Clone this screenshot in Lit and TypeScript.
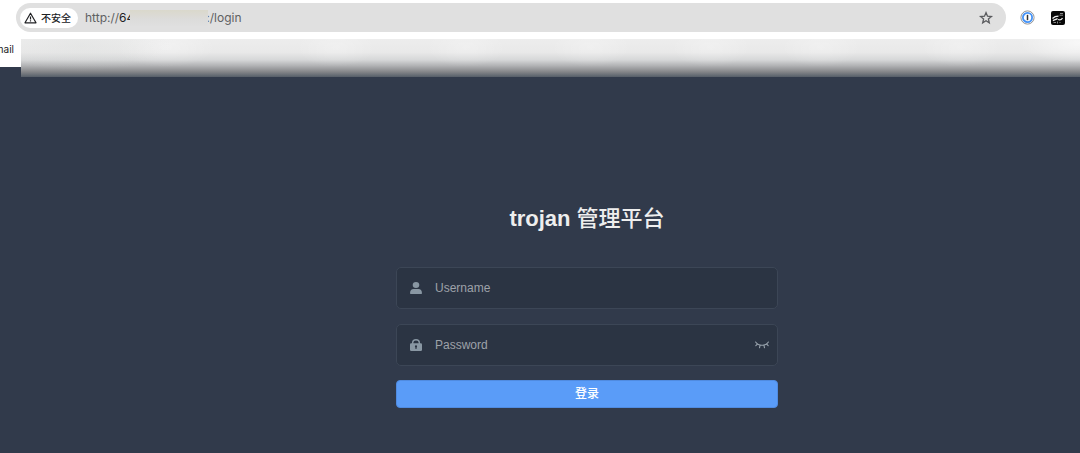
import { LitElement, html, css } from "lit";
import { customElement, state } from "lit/decorators.js";

@customElement("browser-bar")
class BrowserBar extends LitElement {
  static styles = css`
    :host {
      display: block;
      position: relative;
      z-index: 1;
      height: 67px;
      background: #fff;
      font-family: Inter, "Noto Sans CJK SC", sans-serif;
    }
    .toolbar {
      display: flex;
      align-items: center;
      padding: 3px 15px 0 16px;
    }
    .address {
      display: flex;
      align-items: center;
      flex: 1;
      height: 29px;
      box-sizing: border-box;
      padding: 0 12px 0 4px;
      border-radius: 15px;
      background: #e0e0e0;
    }
    button {
      display: flex;
      align-items: center;
      border: 0;
      padding: 0;
      background: none;
      font: inherit;
      color: #202124;
    }
    .security {
      height: 20px;
      gap: 4px;
      padding: 0 7px 0 4px;
      border-radius: 10px;
      background: #fff;
      font-size: 10px;
      line-height: 20px;
      font-weight: 500;
    }
    .url {
      display: flex;
      align-items: center;
      flex: 1;
      margin-left: 7px;
      font-size: 12px;
      line-height: 18px;
      color: #5f6063;
    }
    .host {
      color: #202124;
    }
    .mask {
      position: relative;
      width: 78px;
      height: 16px;
      margin: 0 -2px 0 -4px;
      background: linear-gradient(#dad8cc, #dcdcdb 60%, #dfdfdf);
    }
    .tools {
      display: flex;
      gap: 16px;
      margin-left: 14px;
    }
    .bookmarks {
      display: flex;
      justify-content: flex-end;
      width: 14px;
      margin-top: 8px;
      overflow: hidden;
      font-size: 10px;
      line-height: 18px;
      color: #202124;
    }
    .haze {
      position: absolute;
      top: 39px;
      right: 0;
      left: 21px;
      height: 38px;
      background:
        radial-gradient(90px 26px at 60px 6px, #d4d8d640, transparent),
        radial-gradient(50px 20px at 145px 8px, #ffffff50, transparent),
        radial-gradient(40px 20px at 315px 8px, #ffffff40, transparent),
        radial-gradient(40px 20px at 445px 8px, #ffffff40, transparent),
        radial-gradient(40px 20px at 570px 8px, #ffffff40, transparent),
        radial-gradient(40px 20px at 690px 8px, #ffffff40, transparent),
        radial-gradient(40px 20px at 800px 8px, #ffffff40, transparent),
        radial-gradient(40px 20px at 940px 8px, #ffffff40, transparent),
        radial-gradient(60px 20px at 100% 4px, #ffffffa0, transparent),
        linear-gradient(#ededed, #e9e9e9 35%, #d6d7d8 55%, #b2b3b5 70%, #86878a 86%, #606770 97%, #565e68);
    }
  `;

  render() {
    return html`
      <div class="toolbar">
        <div class="address">
          <button class="security">
            <svg width="13" height="12" viewBox="0 0 13 12" fill="none" stroke="#202124" stroke-width="1.2">
              <path d="M6.5 1.2 12 10.8H1Z" stroke-linejoin="round" />
              <path d="M6.5 4.4v3M6.5 8.3v1.2" />
            </svg>
            不安全
          </button>
          <div class="url">
            <span>http://</span><span class="host">64</span><span class="mask"></span><span>:/login</span>
          </div>
          <button aria-label="Bookmark">
            <svg width="16" height="16" viewBox="0 0 16 16" fill="none" stroke="#5a5b5e" stroke-width="1.3">
              <path d="m8 2.600 1.500 3.600 3.900.3-3 2.500.9 3.800L8 10.800l-3.300 2 .9-3.800-3-2.500 3.900-.3Z" />
            </svg>
          </button>
        </div>
        <div class="tools">
          <button aria-label="Passwords">
            <svg width="15" height="15" viewBox="0 0 15 15">
              <circle cx="7.5" cy="7.5" r="6.6" fill="#fff" stroke="#8a8a8a" stroke-width=".9" />
              <circle cx="7.5" cy="7.5" r="4.6" fill="#fff" stroke="#4593f7" stroke-width="1.8" />
              <path d="M7.5 4.8v5.4" stroke="#333" stroke-width="1.5" />
            </svg>
          </button>
          <button aria-label="Extension">
            <svg width="14" height="14" viewBox="0 0 14 14">
              <rect width="14" height="14" rx="2" fill="#080808" />
              <path d="M1.500 7.500C3 6 5 5.200 7.500 5.200M7 8.500c1.500.6 3.500.2 4.500-1.500M2 9.800c1.500-1.200 3-1 4.500-2.300" fill="none" stroke="#eee" stroke-width="1.300" />
              <path d="M9 2.500h3M8.500 4.200h3.500M2.500 11.500h2.500M6.500 10.500v2M8.500 11.500h1" stroke="#888" />
            </svg>
          </button>
        </div>
      </div>
      <div class="bookmarks"><span>Gmail</span></div>
      <div class="haze"></div>
    `;
  }
}

@customElement("login-form")
class LoginForm extends LitElement {
  @state() private reveal = false;

  static styles = css`
    :host {
      display: block;
      width: 382px;
      max-width: 90%;
      font-family: "Liberation Sans", "Noto Sans CJK SC", sans-serif;
    }
    h1 {
      margin: 0 0 31px;
      font-size: 22px;
      line-height: 34px;
      font-weight: 700;
      text-align: center;
      color: #eee;
    }
    h1 span {
      font-weight: 500;
    }
    .field {
      display: flex;
      align-items: center;
      height: 42px;
      box-sizing: border-box;
      margin-bottom: 15px;
      padding: 0 8px 0 13px;
      border: 1px solid #3c4656;
      border-radius: 5px;
      background: #2b3443;
    }
    .field + .field {
      margin-bottom: 14px;
    }
    label {
      display: flex;
    }
    input {
      flex: 1;
      min-width: 0;
      margin-left: 13px;
      padding: 0;
      border: 0;
      outline: 0;
      background: none;
      font: inherit;
      font-size: 12px;
      line-height: 16px;
      color: #fff;
    }
    input::placeholder {
      color: #9ea2a9;
      opacity: 1;
    }
    button {
      border: 0;
      padding: 0;
      background: none;
      font: inherit;
    }
    .eye {
      display: flex;
    }
    .submit {
      display: block;
      width: 100%;
      height: 28px;
      border: 1px solid #508be0;
      border-radius: 4px;
      background: #5a9cf8;
      font-size: 12px;
      line-height: 26px;
      font-weight: 500;
      color: #fff;
    }
  `;

  render() {
    return html`
      <form @submit=${(e: Event) => e.preventDefault()}>
        <h1>trojan <span>管理平台</span></h1>
        <div class="field">
          <label for="username" aria-label="Username">
            <svg width="12" height="12" viewBox="0 0 12 12" fill="#8997a3">
              <ellipse cx="6" cy="3" rx="3.3" ry="3" />
              <path d="M0 11.2C0 8.500 1.500 7 3.500 7h5C10.500 7 12 8.500 12 11.200q0 .8-.8.8H.8Q0 12 0 11.200Z" />
            </svg>
          </label>
          <input id="username" type="text" placeholder="Username" />
        </div>
        <div class="field">
          <label for="password" aria-label="Password">
            <svg width="12" height="12" viewBox="0 0 12 12">
              <path d="M2.700 5.500V3.600a3.300 2.900 0 0 1 6.600 0v1.900" fill="none" stroke="#8997a3" stroke-width="1.400" />
              <rect y="4.200" width="12" height="7.800" rx="1.200" fill="#8997a3" />
              <circle cx="6" cy="7.400" r="1.100" fill="#2b3443" />
              <path d="M6 7.500v2.500" stroke="#2b3443" stroke-width="1.100" />
            </svg>
          </label>
          <input id="password" type=${this.reveal ? "text" : "password"} placeholder="Password" />
          <button
            class="eye"
            type="button"
            aria-label="Show password"
            @click=${() => (this.reveal = !this.reveal)}
          >
            <svg width="14" height="8" viewBox="0 0 14 8" fill="none" stroke="#98a2ac" stroke-width="1.100" stroke-linecap="round">
              <path d="M.6 1C3.500 5.400 10.500 5.400 13.400 1M2.500 3 .8 4.600M5 4.300 4.500 6.800M9 4.300l.5 2.500M11.500 3l1.700 1.600" />
            </svg>
          </button>
        </div>
        <button class="submit" type="submit">登录</button>
      </form>
    `;
  }
}

@customElement("app-root")
class AppRoot extends LitElement {
  static styles = css`
    :host {
      display: flex;
      flex-direction: column;
      min-height: 100vh;
      overflow: hidden;
      background: #313a4b;
    }
    main {
      display: flex;
      justify-content: center;
      padding: 135px 0 45px 94px;
    }
  `;

  render() {
    return html`
      <browser-bar></browser-bar>
      <main><login-form></login-form></main>
    `;
  }
}
